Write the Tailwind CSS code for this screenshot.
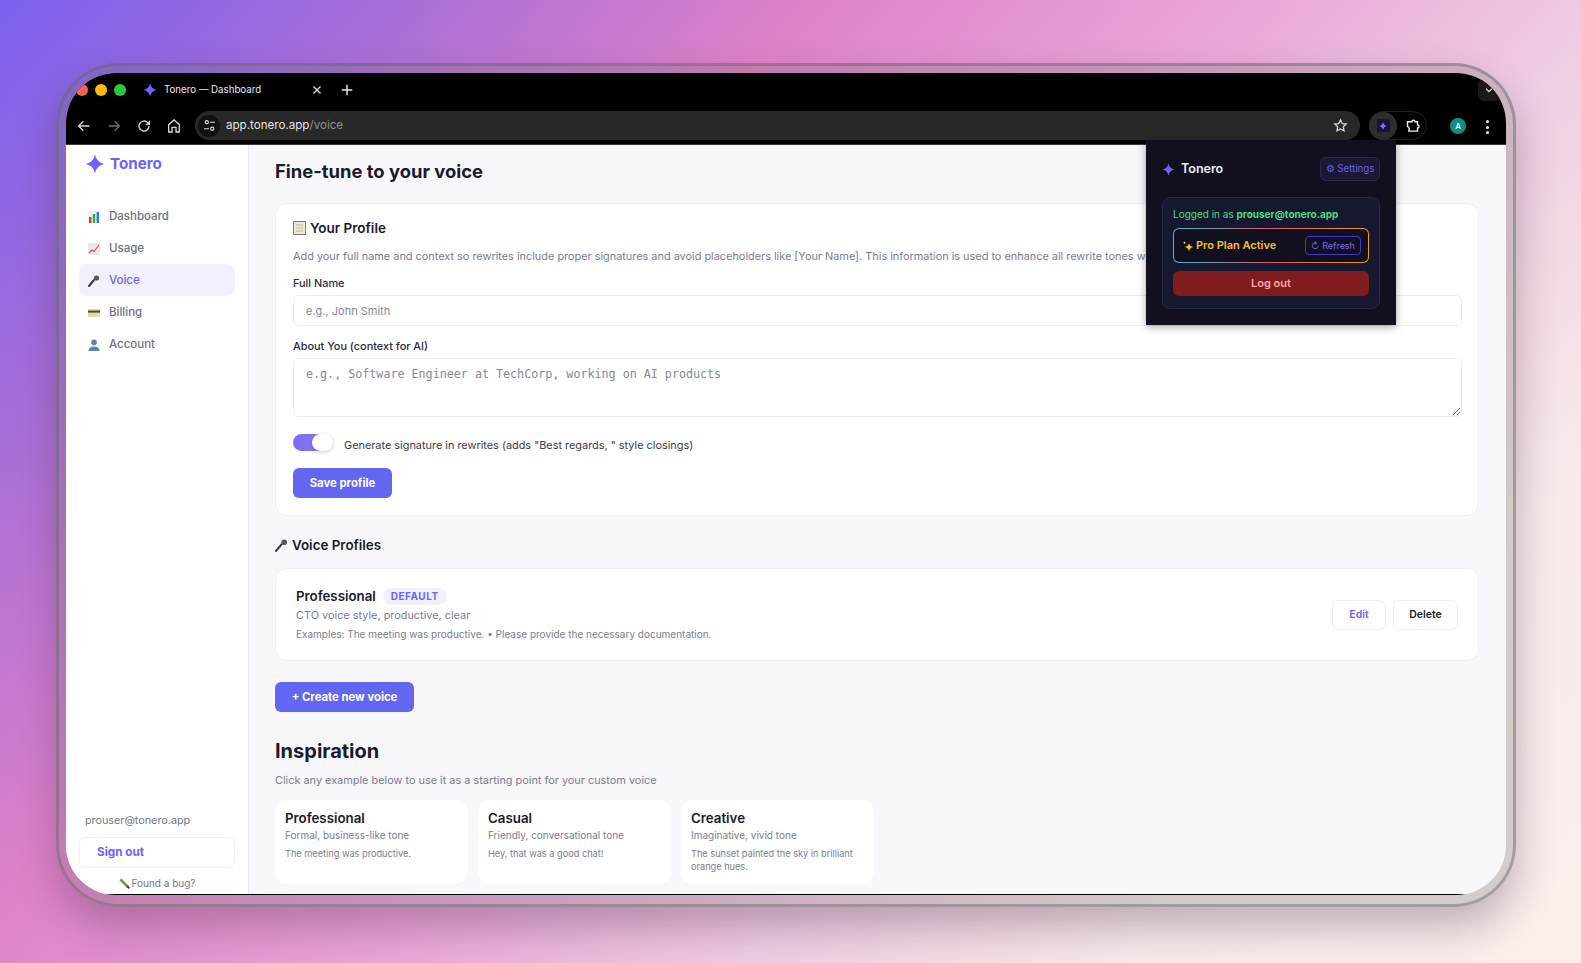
<!DOCTYPE html>
<html lang="en">

<head>
  <meta charset="UTF-8">
  <title>Tonero — Dashboard</title>
  <script src="https://cdn.jsdelivr.net/npm/@tailwindcss/browser@4"></script>
</head>

<body class="w-[1581px] h-[963px] overflow-hidden font-['Inter',sans-serif] bg-[linear-gradient(132deg,#7b60ee_0%,#a96fd8_17%,#df82c9_33%,#e9a4d8_50%,#efcde2_66%,#f8ebea_82%,#faf0ec_100%)]">

  <!-- device frame -->
  <div class="ml-[56px] mt-[63px] w-[1460px] h-[844px] p-[7px] rounded-[62px] border-[3px] border-[#666666]/45 bg-[#666666]/25 shadow-[0_20px_40px_rgba(60,30,60,0.3)]">
    <div class="relative w-[1440px] h-[822px] rounded-[50px] overflow-hidden bg-[#f7f7fc] flex flex-col">

      <!-- tab strip -->
      <div class="h-[38px] pb-[4px] bg-black flex items-center shrink-0">
        <div class="flex gap-[7px] pl-[10px]">
          <span class="w-3 h-3 rounded-full bg-[#ff5f57]"></span>
          <span class="w-3 h-3 rounded-full bg-[#fdbc11]"></span>
          <span class="w-3 h-3 rounded-full bg-[#28c840]"></span>
        </div>
        <svg class="w-[14px] h-[14px] ml-[17px] text-[#6c63ff]" viewBox="0 0 24 24" fill="currentColor"><path d="M12 1 Q14 10 23 12 Q14 14 12 23 Q10 14 1 12 Q10 10 12 1Z" /></svg>
        <span class="ml-[7px] w-[147px] text-[9.7px] text-[#e8e8e8]">Tonero — Dashboard</span>
        <svg class="w-[12px] h-[12px] text-[#e0e0e0]" viewBox="0 0 24 24" fill="none" stroke="currentColor" stroke-width="2.5"><path d="M5 5l14 14M19 5L5 19" /></svg>
        <svg class="w-[14px] h-[14px] ml-[17px] text-[#e8e8e8]" viewBox="0 0 24 24" fill="none" stroke="currentColor" stroke-width="2.5"><path d="M12 3v18M3 12h18" /></svg>
        <div class="ml-auto mr-[6px] w-[22px] h-[22px] rounded-md bg-[#1a1a1a] flex items-center justify-center">
          <svg class="w-[10px] h-[10px] text-[#ddd]" viewBox="0 0 24 24" fill="none" stroke="currentColor" stroke-width="3"><path d="M5 9l7 7 7-7" /></svg>
        </div>
      </div>

      <!-- toolbar -->
      <div class="h-[34px] bg-black flex items-start shrink-0 border-b border-[#3a3a3a]">
        <div class="flex items-center h-[30px] pl-[10px] gap-[14px] text-[#d8d8d8]">
          <svg class="w-[16px] h-[16px]" viewBox="0 0 24 24" fill="none" stroke="currentColor" stroke-width="2"><path d="M20 12H5M11 5l-7 7 7 7" /></svg>
          <svg class="w-[16px] h-[16px] text-[#6e6e6e]" viewBox="0 0 24 24" fill="none" stroke="currentColor" stroke-width="2"><path d="M4 12h15M13 5l7 7-7 7" /></svg>
          <svg class="w-[16px] h-[16px]" viewBox="0 0 24 24" fill="none" stroke="currentColor" stroke-width="2"><path d="M19.5 12a7.5 7.5 0 1 1-2.2-5.3L20 9.5M20 4v5.5h-5.5" /></svg>
          <svg class="w-[16px] h-[16px]" viewBox="0 0 24 24" fill="none" stroke="currentColor" stroke-width="2"><path d="M4 21V10l8-7 8 7v11h-5v-7H9v7z" /></svg>
        </div>
        <div class="ml-[13px] w-[1165px] h-[29px] rounded-full bg-[#282828] flex items-center pl-[3px] pr-[12px]">
          <div class="w-[22px] h-[22px] rounded-full bg-[#111] flex items-center justify-center">
            <svg class="w-[13px] h-[13px] text-[#e0e0e0]" viewBox="0 0 24 24" fill="none" stroke="currentColor" stroke-width="2"><circle cx="7" cy="6" r="3" /><path d="M13 6h9M2 18h9" /><circle cx="17" cy="18" r="3" /></svg>
          </div>
          <span class="ml-[6px] text-[11.6px] text-[#e4e4e4]">app.tonero.app<span class="text-[#8f8f8f]">/voice</span></span>
          <svg class="ml-auto w-[15px] h-[15px] text-[#d8d8d8]" viewBox="0 0 24 24" fill="none" stroke="currentColor" stroke-width="2"><path d="M12 3l2.8 5.9 6.4.8-4.7 4.4 1.2 6.4L12 17.4l-5.7 3.1 1.2-6.4-4.7-4.4 6.4-.8z" /></svg>
        </div>
        <div class="ml-[9px] w-[58px] h-[29px] rounded-full border border-[#222] flex items-center">
          <div class="w-[28px] h-[28px] rounded-full bg-[#2e2e2e] flex items-center justify-center -ml-px">
            <div class="w-[13px] h-[13px] bg-[#15153a] flex items-center justify-center">
              <svg class="w-[8px] h-[8px] text-[#7c6cff]" viewBox="0 0 24 24" fill="currentColor"><path d="M12 1 Q14 10 23 12 Q14 14 12 23 Q10 14 1 12 Q10 10 12 1Z" /></svg>
            </div>
          </div>
          <svg class="ml-[8px] w-[15px] h-[15px] text-[#eee]" viewBox="0 0 24 24" fill="none" stroke="currentColor" stroke-width="2.2"><path d="M4 6h7a2.500 2.500 0 0 1 5 0h4v5a2.500 2.500 0 0 1 0 5v5H6l1-4-3-4z" /></svg>
        </div>
        <div class="ml-[23px] mt-[7px] w-[16px] h-[16px] rounded-full bg-[#0f9080] text-white text-[8px] font-medium flex items-center justify-center">A</div>
        <div class="ml-[20px] mt-[9px] flex flex-col gap-[2.5px]">
          <span class="w-[3px] h-[3px] rounded-full bg-[#e8e8e8]"></span>
          <span class="w-[3px] h-[3px] rounded-full bg-[#e8e8e8]"></span>
          <span class="w-[3px] h-[3px] rounded-full bg-[#e8e8e8]"></span>
        </div>
      </div>

      <!-- app -->
      <div class="flex flex-1 min-h-0 border-b border-black">

        <!-- sidebar -->
        <aside class="w-[183px] shrink-0 bg-white border-r border-[#e8e8f0] flex flex-col px-[13px]">
          <div class="flex items-center gap-[5px] pl-[6px] mt-[9px] h-[20px]">
            <svg class="w-[20px] h-[20px] text-[#6c63ff]" viewBox="0 0 24 24" fill="currentColor"><path d="M12 1 Q14 10 23 12 Q14 14 12 23 Q10 14 1 12 Q10 10 12 1Z" /></svg>
            <span class="text-[15.2px] font-bold text-[#6c63ff]">Tonero</span>
          </div>

          <nav class="mt-[26px] flex flex-col text-[11.5px] font-medium text-[#6e7087]">
            <a class="h-[32px] pt-[2px] flex items-center gap-[9px] pl-[9px]">
              <svg class="w-[12px] h-[12px]" viewBox="0 0 12 12"><rect width="12" height="12" fill="#eef0f2" /><rect x="1" y="6" width="2.4" height="6" fill="#d8343a" /><rect x="4.8" y="3" width="2.4" height="9" fill="#2fa84f" /><rect x="8.6" y="1" width="2.4" height="11" fill="#3577d4" /></svg>
              Dashboard
            </a>
            <a class="h-[32px] pt-[2px] flex items-center gap-[9px] pl-[9px]">
              <svg class="w-[12px] h-[12px]" viewBox="0 0 12 12"><rect width="12" height="12" fill="#e9e9ec" /><path d="M1 10l3-3 2 1.500L11 2" fill="none" stroke="#d84a55" stroke-width="1.2" /></svg>
              Usage
            </a>
            <a class="h-[32px] pt-[2px] flex items-center gap-[9px] pl-[9px] rounded-lg bg-[#f0f1fd] text-[#6c63ff]">
              <svg class="w-[12px] h-[12px]" viewBox="0 0 12 12"><path d="M1 11L6 5" stroke="#3a3a42" stroke-width="2" stroke-linecap="round" /><circle cx="8.5" cy="3" r="2.6" fill="#55555f" /></svg>
              Voice
            </a>
            <a class="h-[32px] pt-[2px] flex items-center gap-[9px] pl-[9px]">
              <svg class="w-[12px] h-[12px]" viewBox="0 0 12 12"><rect y="2" width="12" height="8" rx="1" fill="#e6dc9c" /><rect y="3.6" width="12" height="2" fill="#4a4a3a" /></svg>
              Billing
            </a>
            <a class="h-[32px] pt-[2px] flex items-center gap-[9px] pl-[9px]">
              <svg class="w-[12px] h-[12px]" viewBox="0 0 12 12" fill="#5f86a8"><circle cx="6" cy="3.4" r="2.8" /><path d="M0.5 12c0-3.4 2.4-4.6 5.5-4.600s5.500 1.200 5.500 4.600z" /></svg>
              Account
            </a>
          </nav>

          <div class="mt-auto pl-[6px] text-[10.8px] text-[#74768c]">prouser@tonero.app</div>
          <button class="mt-[8px] h-[31px] w-full text-left pl-[17px] rounded-md border border-[#f0f0f6] bg-white text-[11.7px] font-bold text-[#6c63ff]">Sign out</button>
          <div class="mt-[8px] mb-[3px] flex items-center justify-center gap-[2px] text-[10px] text-[#74768c]">
            <svg class="w-[11px] h-[11px]" viewBox="0 0 12 12"><path d="M1.5 1.5l8 8" stroke="#7a9a3a" stroke-width="3" /><path d="M9 9l2.2 2.2" stroke="#333" stroke-width="2" /></svg>
            Found a bug?
          </div>
        </aside>

        <!-- main -->
        <main class="flex-1 min-w-0 pl-[26px] pr-[27px] overflow-hidden text-[#1a1a2e]">
          <h1 class="mt-[12px] text-[18.4px] leading-[28px] font-bold">Fine-tune to your voice</h1>

          <section class="mt-[18px] h-[313px] bg-white rounded-xl border border-[#eeeef5] pl-[17px] pr-[16px] overflow-hidden">
            <h2 class="mt-[12px] flex items-center gap-[4px] text-[13.5px] leading-[24px] font-semibold">
              <svg class="w-[13px] h-[14px]" viewBox="0 0 13 14"><rect x="0.5" y="0.5" width="12" height="13" fill="#efe9dc" stroke="#8a7a5e" /><path d="M3 4h7M3 7h7M3 10h7" stroke="#b9b09c" /></svg>
              Your Profile
            </h2>
            <p class="mt-[8px] w-[854px] overflow-hidden text-[10.9px] leading-[16px] text-[#7a7d90] whitespace-nowrap">Add your full name and context so rewrites include proper signatures and avoid placeholders like [Your Name]. This information is used to enhance all rewrite tones with your details.</p>

            <label class="block mt-[11px] text-[10.9px] leading-[16px] font-medium text-[#2b2b3c]">Full Name</label>
            <input type="text" placeholder="e.g., John Smith" class="block mt-[4px] w-full h-[31px] px-[12px] rounded-md border border-[#ececf2] bg-white text-[11px] placeholder:text-[#85879a]">

            <label class="block mt-[12px] text-[10.9px] leading-[16px] font-medium text-[#2b2b3c]">About You (context for AI)</label>
            <textarea placeholder="e.g., Software Engineer at TechCorp, working on AI products" class="block mt-[4px] w-full h-[59px] px-[12px] py-[7px] rounded-md border border-[#ececf2] bg-white font-['DejaVu_Sans_Mono',monospace] text-[11.7px] leading-[16px] placeholder:text-[#85879a]"></textarea>

            <div class="mt-[17px] h-[17px] flex items-start">
              <div class="relative w-[40px] h-[17px]">
                <div class="w-[37px] h-[17px] rounded-full bg-[linear-gradient(90deg,#7c6cf6,#8b7cf6)]"></div>
                <div class="absolute right-0 top-0 w-[21px] h-[17px] rounded-full bg-white shadow-[0_1px_4px_rgba(0,0,0,0.22)]"></div>
              </div>
              <span class="ml-[11px] pt-[3px] text-[10.9px] leading-[16px] text-[#3a3b4a]">Generate signature in rewrites (adds "Best regards, " style closings)</span>
            </div>

            <button class="mt-[17px] w-[99px] h-[30px] rounded-md bg-[#6366f1] text-white text-[11.3px] font-bold">Save profile</button>
          </section>

          <h2 class="mt-[17px] flex items-center gap-[4px] text-[13.4px] leading-[24px] font-semibold">
            <svg class="w-[13px] h-[13px]" viewBox="0 0 12 12"><path d="M1 11L6 5" stroke="#3a3a42" stroke-width="2" stroke-linecap="round" /><circle cx="8.5" cy="3" r="2.6" fill="#55555f" /></svg>
            Voice Profiles
          </h2>

          <section class="mt-[11px] h-[93px] bg-white rounded-xl border border-[#eeeef5] pl-[20px] pr-[20px] flex items-center">
            <div class="pb-[2px]">
              <div class="flex items-center gap-[7px]">
                <span class="text-[13.3px] leading-[20px] font-semibold">Professional</span>
                <span class="mt-[2px] px-[8px] h-[17px] rounded-full bg-[#f0f1fb] text-[10px] leading-[17px] font-bold tracking-[0.5px] text-[#6c63ff]">DEFAULT</span>
              </div>
              <p class="mt-[1px] text-[10.9px] leading-[16px] text-[#7a7d90]">CTO voice style, productive, clear</p>
              <p class="mt-[3px] text-[10px] leading-[16px] text-[#7a7d90]">Examples: The meeting was productive. • Please provide the necessary documentation.</p>
            </div>
            <div class="ml-auto flex gap-[7px] text-[10.5px] font-semibold">
              <button class="w-[54px] h-[30px] rounded-md border border-[#eeeef5] text-[#6c63ff]">Edit</button>
              <button class="w-[65px] h-[30px] rounded-md border border-[#eeeef5] text-[#1a1a2e]">Delete</button>
            </div>
          </section>

          <button class="block mt-[21px] w-[139px] h-[30px] rounded-md bg-[#6366f1] text-white text-[11.3px] font-bold">+ Create new voice</button>

          <h2 class="mt-[25px] text-[20px] leading-[28px] font-bold">Inspiration</h2>
          <p class="mt-[7px] text-[10.9px] leading-[16px] text-[#7a7d90]">Click any example below to use it as a starting point for your custom voice</p>

          <div class="mt-[12px] grid grid-cols-[193px_193px_193px] gap-[10px]">
            <div class="h-[84px] rounded-xl bg-white px-[10px] pt-[9px]">
              <h3 class="text-[13.3px] leading-[18px] font-semibold">Professional</h3>
              <p class="text-[10px] leading-[16px] text-[#7a7d90]">Formal, business-like tone</p>
              <p class="mt-[4px] text-[9.2px] leading-[13px] text-[#7a7d90]">The meeting was productive.</p>
            </div>
            <div class="h-[84px] rounded-xl bg-white px-[10px] pt-[9px]">
              <h3 class="text-[13.3px] leading-[18px] font-semibold">Casual</h3>
              <p class="text-[10px] leading-[16px] text-[#7a7d90]">Friendly, conversational tone</p>
              <p class="mt-[4px] text-[9.2px] leading-[13px] text-[#7a7d90]">Hey, that was a good chat!</p>
            </div>
            <div class="h-[84px] rounded-xl bg-white px-[10px] pt-[9px]">
              <h3 class="text-[13.3px] leading-[18px] font-semibold">Creative</h3>
              <p class="text-[10px] leading-[16px] text-[#7a7d90]">Imaginative, vivid tone</p>
              <p class="mt-[4px] text-[9.2px] leading-[13px] text-[#7a7d90]">The sunset painted the sky in brilliant orange hues.</p>
            </div>
          </div>
        </main>
      </div>

      <!-- extension popup -->
      <div class="absolute left-[1080px] top-[67px] w-[250px] h-[185px] bg-[#10101f] shadow-[0_2px_8px_rgba(0,0,0,0.35)] px-[16px] pt-[17px]">
        <div class="flex items-center justify-between">
          <div class="flex items-center gap-[6px]">
            <svg class="w-[13px] h-[13px] text-[#6c63ff]" viewBox="0 0 24 24" fill="currentColor"><path d="M12 1 Q14 10 23 12 Q14 14 12 23 Q10 14 1 12 Q10 10 12 1Z" /></svg>
            <span class="pt-[1px] text-[12.5px] font-semibold text-[#eeeef5]">Tonero</span>
          </div>
          <button class="w-[60px] h-[24px] rounded-md bg-[#191933] border border-[#2a2a4c] text-[9.7px] text-[#6a5fe6]">⚙ Settings</button>
        </div>
        <div class="mt-[16px] h-[112px] rounded-lg bg-[#161830] border border-[#262b47] px-[10px] pt-[9px]">
          <p class="text-[10px] leading-[14px] text-[#4ade80]">Logged in as <span class="font-bold">prouser@tonero.app</span></p>
          <div class="mt-[7px] h-[35px] rounded-md p-px bg-[linear-gradient(90deg,#3fb6d0,#e2566e_50%,#f59e0b)]">
            <div class="h-full rounded-[5px] bg-[#10101f] flex items-center pl-[8px] pr-[7px]">
              <svg class="w-[12px] h-[12px] text-[#fbbf24]" viewBox="0 0 24 24" fill="currentColor"><path d="M14 6 Q15 13 23 14 Q15 15 14 23 Q13 15 5 14 Q13 13 14 6Z" /><path d="M5 2 Q5.500 5 8 5.500 Q5.500 6 5 9 Q4.500 6 2 5.500 Q4.500 5 5 2Z" /></svg>
              <span class="ml-[2px] text-[11px] font-semibold text-[#fbbf24]">Pro Plan Active</span>
              <button class="ml-auto w-[56px] h-[19px] rounded-[4px] border border-[#4338ca] text-[9px] text-[#7c6cf0]">↻ Refresh</button>
            </div>
          </div>
          <button class="block mt-[8px] w-full h-[25px] rounded-md bg-[#7f1d1d] text-[11px] font-semibold text-[#fca5a5]">Log out</button>
        </div>
      </div>
    </div>
  </div>

</body>

</html>
